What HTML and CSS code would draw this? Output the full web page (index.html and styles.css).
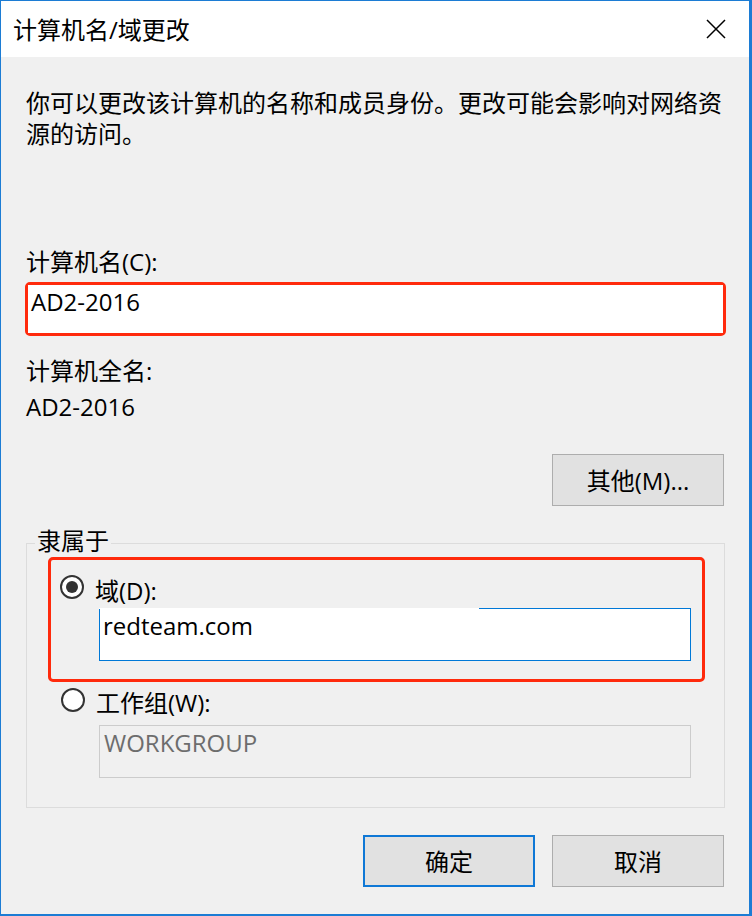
FILE: index.html
```html
<!DOCTYPE html>
<html lang="zh-CN">
<head>
<meta charset="utf-8">
<title>计算机名/域更改</title>
<link rel="stylesheet" href="styles.css">
</head>
<body>
<div class="window">
  <div class="titlebar">
    <span class="title">计算机名/域更改</span>
    <svg class="close" width="20" height="20" viewBox="0 0 20 20" aria-hidden="true">
      <path d="M1 1 L19 19 M19 1 L1 19" stroke="#000" stroke-width="1.5" fill="none"/>
    </svg>
  </div>
  <div class="content">
    <p class="intro">你可以更改该计算机的名称和成员身份。更改可能会影响对网络资源的访问。</p>
    <div class="label label-name">计算机名(C):</div>
    <div class="highlight hl-name">
      <div class="textbox tb-name">AD2-2016</div>
    </div>
    <div class="label label-full">计算机全名:</div>
    <div class="value">AD2-2016</div>
    <div class="row-right row-more">
      <div class="button">其他(M)...</div>
    </div>
    <div class="group">
      <span class="legend">隶属于</span>
      <div class="highlight hl-domain">
        <div class="radio-row">
          <span class="radio checked"></span>
          <span class="radio-label">域(D):</span>
        </div>
        <div class="textbox tb-domain">redteam.com</div>
      </div>
      <div class="radio-row rr-work">
        <span class="radio"></span>
        <span class="radio-label">工作组(W):</span>
      </div>
      <div class="textbox tb-work">WORKGROUP</div>
    </div>
    <div class="row-right row-actions">
      <div class="button default">确定</div>
      <div class="button">取消</div>
    </div>
  </div>
</div>
</body>
</html>
```
FILE: styles.css
```css
* { box-sizing: border-box; }
html, body { margin: 0; padding: 0; }
body {
  width: 752px;
  height: 916px;
  overflow: hidden;
  background: #f0f0f0;
  font-family: "Open Sans", "Noto Sans CJK SC", sans-serif;
  font-size: 24px;
  line-height: 31px;
  color: #000;
}
.window {
  width: 752px;
  height: 916px;
  border-style: solid;
  border-color: #1c7cd4;
  border-width: 1px 3px 2px 1px;
  background: #f0f0f0;
  display: flex;
  flex-direction: column;
}
.titlebar {
  height: 56px;
  flex: none;
  background: #fff;
  display: flex;
  align-items: center;
  padding: 0 23px 0 12px;
}
.title { flex: 1; }
.close { display: block; }
.content {
  padding: 30px 24px 0 25px;
  display: flex;
  flex-direction: column;
}
.intro { margin: 0; }
.label-name { margin-top: 97px; }
.highlight {
  border: 3px solid #ff2a0c;
  border-radius: 5px;
}
.hl-name {
  margin-top: 5px;
  margin-left: -1px;
  margin-right: -1px;
  height: 54px;
}
.textbox {
  background: #fff;
  padding: 1px 0 0 3px;
  white-space: nowrap;
}
.tb-name { height: 48px; }
.label-full { margin-top: 19px; }
.value { margin-top: 5px; }
.row-right {
  display: flex;
  justify-content: flex-end;
  gap: 17px;
}
.row-more { margin-top: 32px; padding-right: 1px; }
.button {
  width: 172px;
  height: 52px;
  background: #e1e1e1;
  border: 1px solid #adadad;
  display: flex;
  align-items: center;
  justify-content: center;
}
.button.default { border: 2px solid #0f78d6; }
.group {
  position: relative;
  margin-top: 37px;
  border: 1px solid #dcdcdc;
  height: 265px;
  padding: 13px 19px 0 0;
  display: flex;
  flex-direction: column;
}
.legend {
  position: absolute;
  top: -19px;
  left: 8px;
  padding: 0 2px;
  background: #f0f0f0;
}
.hl-domain {
  margin-left: 21px;
  height: 125px;
  padding: 15px 0 0 9px;
}
.radio-row {
  display: flex;
  align-items: flex-start;
  height: 31px;
}
.radio {
  width: 24px;
  height: 24px;
  border: 2px solid #333;
  border-radius: 50%;
  background: #fff;
  flex: none;
  display: flex;
  align-items: center;
  justify-content: center;
}
.radio.checked::after {
  content: "";
  width: 12px;
  height: 12px;
  border-radius: 50%;
  background: #333;
}
.radio-label { margin-left: 11px; }
.tb-domain {
  position: relative;
  margin-top: 2px;
  margin-left: 39px;
  width: 592px;
  height: 53px;
  border: 1px solid #0078d7;
}
.tb-domain::before {
  content: "";
  position: absolute;
  top: -1px;
  left: -1px;
  width: 380px;
  height: 1px;
  background: #fff;
}
.rr-work {
  margin-top: 5px;
  padding-left: 34px;
}
.rr-work .radio { margin-top: 1px; }
.tb-work {
  margin-top: 7px;
  margin-left: 72px;
  width: 592px;
  height: 53px;
  background: #f0f0f0;
  border: 1px solid #cccccc;
  color: #6d6d6d;
  padding-left: 4px;
}
.row-actions { margin-top: 27px; padding-right: 1px; }
```
